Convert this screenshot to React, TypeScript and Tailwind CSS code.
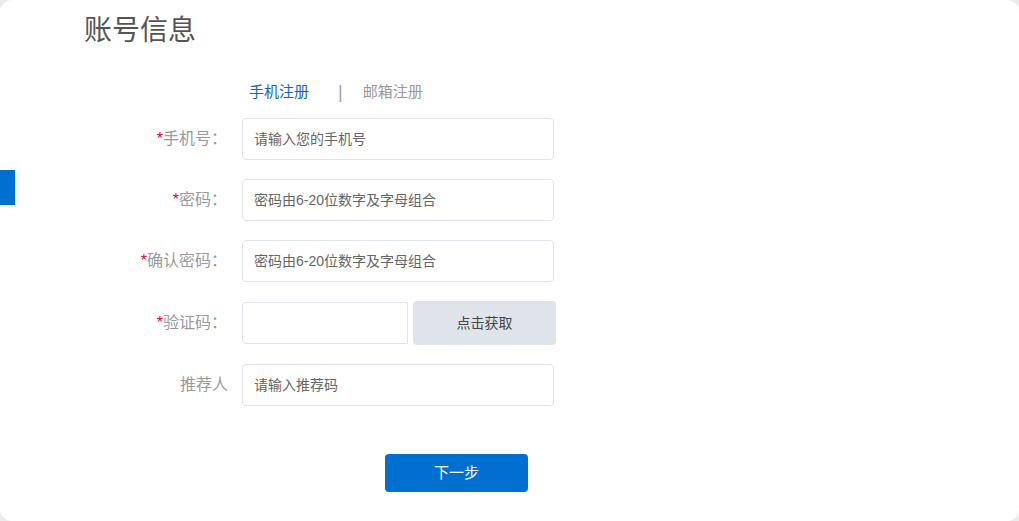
import { useState } from "react";

interface Field {
  label: string;
  required: boolean;
  placeholder: string;
}

const fields: Field[] = [
  { label: "手机号", required: true, placeholder: "请输入您的手机号" },
  { label: "密码", required: true, placeholder: "密码由6-20位数字及字母组合" },
  { label: "确认密码", required: true, placeholder: "密码由6-20位数字及字母组合" },
];

export default function App() {
  const [tab, setTab] = useState<"phone" | "email">("phone");

  return (
    <div
      className="h-[521px] w-[1019px] overflow-hidden bg-[#ececec]"
      style={{ fontFamily: '"Liberation Sans", "Noto Sans CJK SC", sans-serif' }}
    >
      <div className="relative h-full w-full rounded-xl bg-white">
        {/* left side marker */}
        <div className="absolute left-0 top-[170px] h-[35px] w-[15px] bg-[#0070d0]" />

        <h1 className="pl-[84px] pt-[12px] text-[28px] leading-[38px] text-[#555]">账号信息</h1>

        <div className="mt-[31px] flex items-center pl-[249px] text-[15px] leading-[22px]">
          <button
            onClick={() => setTab("phone")}
            className={tab === "phone" ? "text-[#1565c0]" : "text-[#999]"}
          >
            手机注册
          </button>
          <span className="ml-[29px] mr-[20px] text-[18px] text-[#9aa3ad]">|</span>
          <button
            onClick={() => setTab("email")}
            className={tab === "email" ? "text-[#1565c0]" : "text-[#999]"}
          >
            邮箱注册
          </button>
        </div>

        <div className="mt-[15px] flex flex-col gap-[19px]">
          {fields.map((f) => (
            <div key={f.label} className="flex items-center">
              <label className="w-[227px] text-right text-[16px] text-[#9a9a9a]">
                {f.required && <span className="text-[#e6003c]">*</span>}
                {f.label}：
              </label>
              <input
                placeholder={f.placeholder}
                className="ml-[15px] h-[42px] w-[312px] rounded-[4px] border border-[#dfe4ea] px-[11px] text-[14px] text-[#333] outline-none placeholder:text-[#666]"
              />
            </div>
          ))}

          <div className="flex items-center">
            <label className="w-[227px] text-right text-[16px] text-[#9a9a9a]">
              <span className="text-[#e6003c]">*</span>验证码：
            </label>
            <input className="ml-[15px] h-[42px] w-[166px] rounded-l-[4px] border border-[#dfe4ea] px-[11px] text-[14px] outline-none" />
            <button className="ml-[5px] h-[44px] w-[143px] rounded-[4px] bg-[#dee4ea] text-[14px] text-[#444]">
              点击获取
            </button>
          </div>

          <div className="flex items-center">
            <label className="w-[228px] text-right text-[16px] text-[#9a9a9a]">推荐人</label>
            <input
              placeholder="请输入推荐码"
              className="ml-[14px] h-[42px] w-[312px] rounded-[4px] border border-[#dfe4ea] px-[11px] text-[14px] text-[#333] outline-none placeholder:text-[#666]"
            />
          </div>
        </div>

        <div className="mt-[48px] pl-[385px]">
          <button className="h-[38px] w-[143px] rounded-[4px] bg-[#0070d0] text-[15px] text-white">
            下一步
          </button>
        </div>
      </div>
    </div>
  );
}
